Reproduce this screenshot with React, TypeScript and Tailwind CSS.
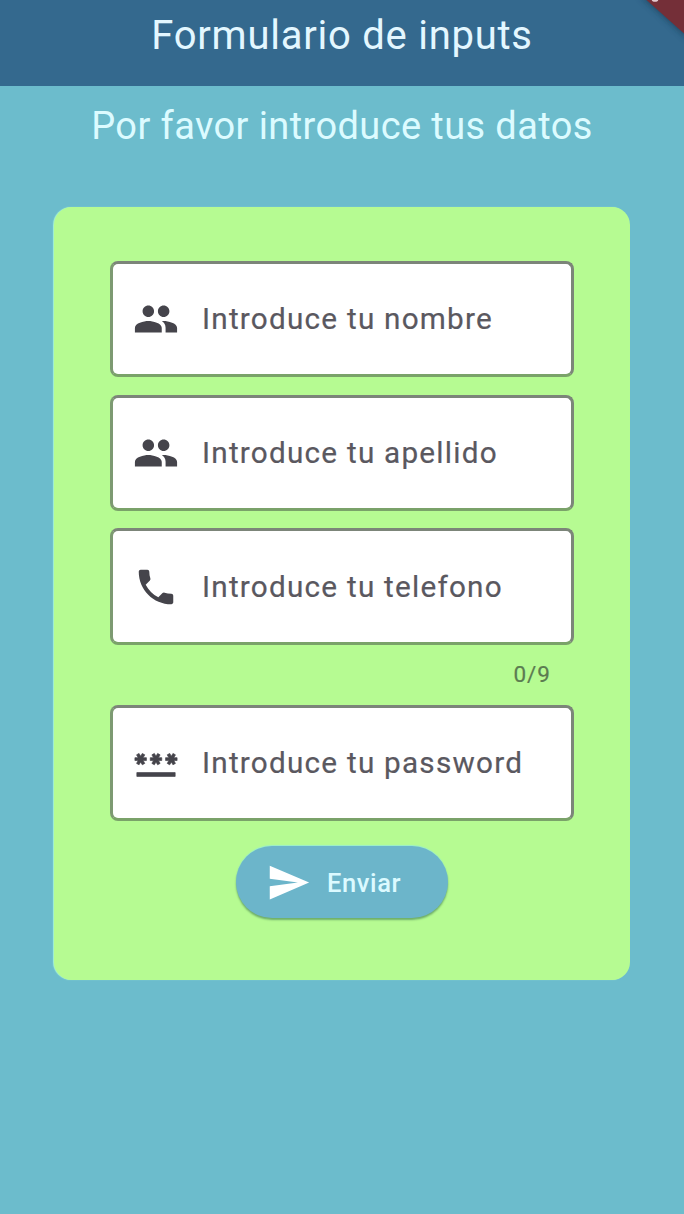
import type { ReactNode } from "react";
import { MdPassword, MdPeople, MdPhone, MdSend } from "react-icons/md";

function Field({ icon, label }: { icon: ReactNode; label: string }) {
  return (
    <div className="flex h-[116.3px] items-center rounded-[8px] border-[3px] border-[#7c8579] border-b-[#7aa269] border-l-[#7d9a72] bg-white pl-[20px] text-[#45444b]">
      {icon}
      <span className="ml-[23px] whitespace-nowrap text-[29.7px] leading-none tracking-[1.23px] text-[#5a585f] [-webkit-text-stroke:0.2px_#5a585f]">
        {label}
      </span>
    </div>
  );
}

export default function App() {
  return (
    <div className="flex h-[1214px] w-[684px] flex-col overflow-hidden bg-[#6cbccc] font-['Roboto',sans-serif]">
      <header className="relative flex h-[86px] shrink-0 justify-center bg-[#34698e] pt-[14px]">
        <h1 className="whitespace-nowrap text-[40px] leading-[43px] tracking-[0.75px] text-[#e3f7ff]">Formulario de inputs</h1>
        <svg className="absolute right-0 top-0" width="60" height="60" viewBox="0 0 60 60">
          <defs>
            <filter id="soft" x="-30%" y="-30%" width="160%" height="160%">
              <feGaussianBlur stdDeviation="3" />
            </filter>
          </defs>
          <path d="M16-4 64 39V-4Z" fill="#153750" opacity=".6" filter="url(#soft)" />
          <path d="M18-4 64 37V4L56-4Z" fill="#742f38" />
          <ellipse cx="31" cy="0" rx="3.2" ry="1.8" fill="#e5c9cf" />
        </svg>
      </header>
      <main className="flex flex-col px-[54px]">
        <h2 className="mt-[19px] whitespace-nowrap text-center text-[38px] leading-[43px] tracking-[0.4px] text-[#dcfbff]">
          Por favor introduce tus datos
        </h2>
        <form className="mt-[59px] flex h-[773px] flex-col rounded-[18px] bg-[#b6fb92] px-[56px] pt-[54px] shadow-[-1px_0_1px_#a5f3d5]">
          <div className="flex flex-col gap-[17.4px]">
            <Field icon={<MdPeople size={46} />} label="Introduce tu nombre" />
            <Field icon={<MdPeople size={46} />} label="Introduce tu apellido" />
            <Field icon={<MdPhone size={46} />} label="Introduce tu telefono" />
          </div>
          <div className="flex h-[60.5px] items-center justify-end pb-px pr-[23px] text-[22.5px] tracking-[1px] text-[#5c7c51] [-webkit-text-stroke:0.2px_#5c7c51]">
            0/9
          </div>
          <Field
            icon={<MdPassword size={46} className="[&>path]:stroke-[#45444b] [&>path]:[stroke-width:0.35px] [&>path:first-child]:stroke-none" />}
            label="Introduce tu password"
          />
          <button
            type="button"
            className="mt-[25px] flex h-[72px] w-[212px] items-center self-center rounded-full bg-[#6cb5ca] pl-[30px] text-[#dcfaff] shadow-[0_2px_2px_#6fae6a,0_-1px_1px_#9beecb]"
          >
            <MdSend size={45} color="#ffffff" />
            <span className="ml-[16px] mt-[2px] text-[25.5px] font-medium leading-none tracking-[0.6px]">Enviar</span>
          </button>
        </form>
      </main>
    </div>
  );
}
